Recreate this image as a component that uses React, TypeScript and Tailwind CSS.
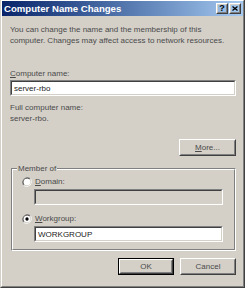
import React from "react";

const font = { fontFamily: '"Liberation Sans", Arial, sans-serif' };

function Raised({ className, children, def }: { className?: string; children: React.ReactNode; def?: boolean }) {
  const body = (
    <div className="h-full border border-white border-r-[#404040] border-b-[#404040]">
      <div className="flex h-full items-center justify-center border border-[#d4d0c8] border-r-[#808080] border-b-[#808080]">
        {children}
      </div>
    </div>
  );
  if (def) return <div className={`border border-black ${className ?? ""}`}>{body}</div>;
  return <div className={className}>{body}</div>;
}

function Sunken({ className, children, disabled }: { className?: string; children?: React.ReactNode; disabled?: boolean }) {
  return (
    <div className={`border border-[#808080] border-r-white border-b-white ${className ?? ""}`}>
      <div
        className={`flex h-full items-center border border-[#404040] border-r-[#d4d0c8] border-b-[#d4d0c8] pl-[2px] ${
          disabled ? "bg-[#d4d0c8]" : "bg-white"
        }`}
      >
        {children}
      </div>
    </div>
  );
}

function Radio({ checked }: { checked?: boolean }) {
  return (
    <svg width="10" height="10" viewBox="0 0 12 12" className="shrink-0">
      <path d="M10.2 1.8 A6 6 0 0 0 1.8 10.2" stroke="#808080" strokeWidth="1" fill="none" />
      <path d="M1.8 10.2 A6 6 0 0 0 10.2 1.8" stroke="#ffffff" strokeWidth="1" fill="none" />
      <path d="M9.5 2.5 A5 5 0 0 0 2.5 9.5" stroke="#404040" strokeWidth="1" fill="none" />
      <path d="M2.5 9.5 A5 5 0 0 0 9.5 2.5" stroke="#d4d0c8" strokeWidth="1" fill="none" />
      <circle cx="6" cy="6" r="4" fill="#ffffff" />
      {checked && <circle cx="6" cy="6" r="2" fill="#000000" />}
    </svg>
  );
}

export default function App() {
  return (
    <div style={font} className="h-[288px] w-[245px] overflow-hidden border-l border-r border-b border-l-[#d4d0c8] border-r-[#404040] border-b-[#404040] bg-[#d4d0c8]">
      <div className="flex h-full flex-col border border-white border-r-[#808080] border-b-[#808080]">
        {/* title bar */}
        <div className="flex h-[15px] items-center justify-between bg-gradient-to-r from-[#0a246a] to-[#a6caf0] pl-[2px] pr-[2px]">
          <span className="text-[9.6px] font-bold leading-none text-white">Computer Name Changes</span>
          <div className="flex">
            <Raised className="h-[11px] w-[12px]">
              <span className="text-[9px] font-bold leading-none text-black">?</span>
            </Raised>
            <Raised className="ml-[1px] h-[11px] w-[12px]">
              <svg width="6" height="5" viewBox="0 0 6 5">
                <path d="M0.5 0.5 L5.5 4.5 M5.5 0.5 L0.5 4.5" stroke="#000" strokeWidth="1.3" />
              </svg>
            </Raised>
          </div>
        </div>

        <div className="flex flex-col pl-[8px] pr-[7px] text-[8px] leading-[11px] text-[#4a4a4a]">
          <p className="mt-[8px]">
            You can change the name and the membership of this
            <br />
            computer. Changes may affect access to network resources.
          </p>

          <p className="mt-[22px]">
            <u>C</u>omputer name:
          </p>
          <Sunken className="mt-[1px] h-[16px]">
            <span className="text-[#222]">server-rbo</span>
          </Sunken>

          <p className="mt-[6px]">Full computer name:</p>
          <p>server-rbo.</p>

          <div className="mt-[15px] flex justify-end">
            <Raised className="h-[17px] w-[57px]">
              <span>
                <u>M</u>ore...
              </span>
            </Raised>
          </div>

          {/* Member of group */}
          <div className="relative ml-[1px] mt-[12px] border border-[#808080] border-r-white border-b-white">
            <span className="absolute left-[5px] top-[-6px] bg-[#d4d0c8] px-[1px]">Member of</span>
            <div className="flex flex-col border border-white border-r-[#808080] border-b-[#808080] pb-[7px] pl-[9px] pt-[6px]">
              <div className="flex items-center gap-[3px]">
                <Radio />
                <span>
                  <u>D</u>omain:
                </span>
              </div>
              <Sunken disabled className="ml-[12px] mt-[2px] h-[16px] w-[189px]" />
              <div className="mt-[8px] flex items-center gap-[3px]">
                <Radio checked />
                <span>
                  <u>W</u>orkgroup:
                </span>
              </div>
              <Sunken className="ml-[12px] mt-[2px] h-[16px] w-[189px]">
                <span className="text-[#222]">WORKGROUP</span>
              </Sunken>
            </div>
          </div>

          <div className="mt-[7px] flex justify-end gap-[6px]">
            <Raised def className="h-[17px] w-[56px]">
              <span>OK</span>
            </Raised>
            <Raised className="h-[17px] w-[56px]">
              <span>Cancel</span>
            </Raised>
          </div>
        </div>
      </div>
    </div>
  );
}
